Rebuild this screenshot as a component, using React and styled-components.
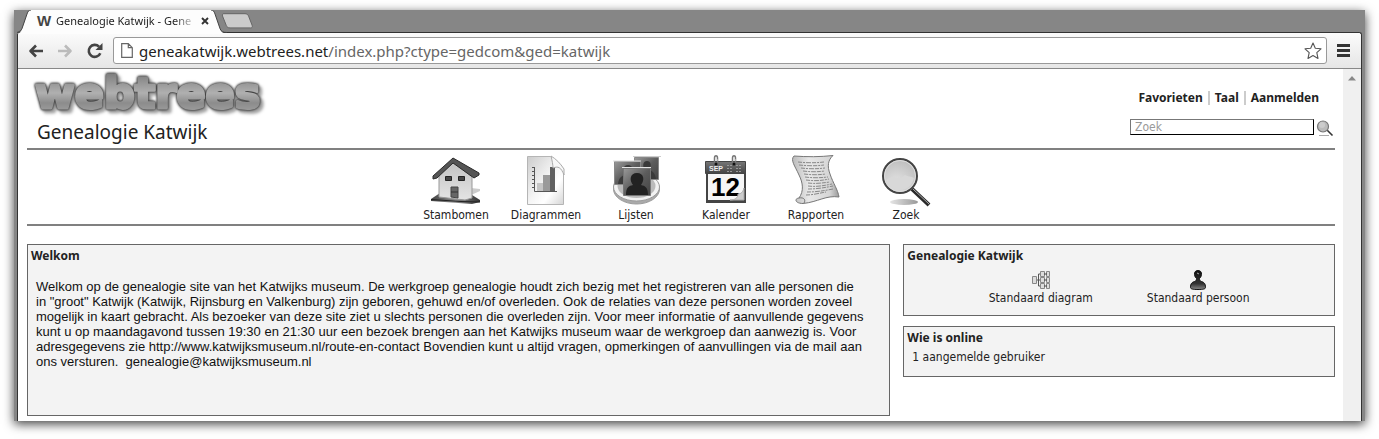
import React from 'react';
import styled, { createGlobalStyle } from 'styled-components';

const UI_FONT = '"DejaVu Sans Condensed", "DejaVu Sans", sans-serif';
const BOLD_FONT = '"Noto Sans", "Open Sans", sans-serif';
const TEXT_FONT = '"Liberation Sans", Arial, sans-serif';
const RULE = '#808080';
const PANEL = '#f3f3f3';

const MENU = [
  { label: 'Stambomen', icon: HouseIcon },
  { label: 'Diagrammen', icon: ChartIcon },
  { label: 'Lijsten', icon: PeopleIcon },
  { label: 'Kalender', icon: CalendarIcon },
  { label: 'Rapporten', icon: ScrollIcon },
  { label: 'Zoek', icon: MagnifierIcon },
];

function App() {
  return (
    <BrowserWindow>
      <GlobalStyle />
      <TabStrip>
        <Tab>
          <TabShape />
          <Favicon>W</Favicon>
          <TabTitle>Genealogie Katwijk - Gene</TabTitle>
          <CloseButton aria-label="Tab sluiten">
            <svg width="8" height="8" viewBox="0 0 8 8"><path d="M1 1l6 6M7 1L1 7" stroke="#333" strokeWidth="1.9" /></svg>
          </CloseButton>
        </Tab>
        <NewTab aria-label="Nieuw tabblad">
          <svg width="32" height="16" viewBox="0 0 32 16">
            <path d="M3 .7h21c2 0 3 1 3.600 2.500l3.500 9c.6 1.800 0 2.700-1.600 2.700H9c-2 0-3-.8-3.700-2.400L1.500 3C1 1.500 1.600.7 3 .7z" fill="#cbcbcb" stroke="#666" />
          </svg>
        </NewTab>
      </TabStrip>

      <Frame>
        <Toolbar>
          <ToolButton aria-label="Terug"><Arrow color="#444" /></ToolButton>
          <ToolButton aria-label="Vooruit"><Arrow color="#bbb" flip /></ToolButton>
          <ToolButton aria-label="Vernieuwen">
            <svg width="18" height="18" viewBox="0 0 18 18">
              <path d="M14.300 11.200A6 6 0 1 1 13 4.600" fill="none" stroke="#444" strokeWidth="2.600" />
              <path d="M16.500 1v7H9.500z" fill="#444" />
            </svg>
          </ToolButton>
          <AddressBar>
            <svg width="12" height="15" viewBox="0 0 12 15">
              <path d="M.7.700h6.600l4 4v9.600H.7zM7.300.7v4h4" fill="#fff" stroke="#666" strokeWidth="1.200" />
            </svg>
            <Url>geneakatwijk.webtrees.net<UrlPath>/index.php?ctype=gedcom&amp;ged=katwijk</UrlPath></Url>
            <ToolButton aria-label="Bladwijzer">
              <svg width="18" height="18" viewBox="0 0 18 18">
                <path d="M9 1l2.300 5.200 5.700.6-4.200 3.900 1.200 5.700L9 13.500l-5 2.900 1.200-5.700L1 6.800l5.700-.6z" fill="#fff" stroke="#555" strokeWidth="1.100" strokeLinejoin="round" />
              </svg>
            </ToolButton>
          </AddressBar>
          <ToolButton aria-label="Menu">
            <svg width="13" height="13" viewBox="0 0 13 13"><path d="M0 1.500h13M0 6.500h13M0 11.500h13" stroke="#333" strokeWidth="3" /></svg>
          </ToolButton>
        </Toolbar>

        <Viewport>
          <Page>
            <Header>
              <Brand>
                <Logo />
                <SiteTitle>Genealogie Katwijk</SiteTitle>
              </Brand>
              <HeaderTools>
                <UserLinks>
                  <UserLink href="#favorieten">Favorieten</UserLink>
                  <UserLink href="#taal">Taal</UserLink>
                  <UserLink href="#aanmelden">Aanmelden</UserLink>
                </UserLinks>
                <Search>
                  <SearchInput type="text" aria-label="Zoek" placeholder="Zoek" />
                  <SearchButton type="button" aria-label="Zoeken"><SmallMagnifier /></SearchButton>
                </Search>
              </HeaderTools>
            </Header>

            <Menu>
              {MENU.map(({ label, icon: Icon }) => (
                <MenuItem key={label} href={`#${label.toLowerCase()}`}>
                  <Icon />
                  {label}
                </MenuItem>
              ))}
            </Menu>

            <Columns>
              <Panel>
                <PanelTitle>Welkom</PanelTitle>
                <Welcome>
                  Welkom op de genealogie site van het Katwijks museum. De werkgroep genealogie houdt zich
                  bezig met het registreren van alle personen die in "groot" Katwijk (Katwijk, Rijnsburg en
                  Valkenburg) zijn geboren, gehuwd en/of overleden. Ook de relaties van deze personen worden
                  zoveel mogelijk in kaart gebracht. Als bezoeker van deze site ziet u slechts personen die
                  overleden zijn. Voor meer informatie of aanvullende gegevens kunt u op maandagavond tussen
                  19:30 en 21:30 uur een bezoek brengen aan het Katwijks museum waar de werkgroep dan aanwezig
                  is. Voor adresgegevens zie http://www.katwijksmuseum.nl/route-en-contact Bovendien kunt u
                  altijd vragen, opmerkingen of aanvullingen via de mail aan ons versturen.
                  &nbsp;genealogie@katwijksmuseum.nl
                </Welcome>
              </Panel>
              <Side>
                <Panel>
                  <PanelTitle>Genealogie Katwijk</PanelTitle>
                  <Shortcuts>
                    <Shortcut href="#diagram"><PedigreeIcon />Standaard diagram</Shortcut>
                    <Shortcut href="#persoon"><PersonIcon />Standaard persoon</Shortcut>
                  </Shortcuts>
                </Panel>
                <Panel>
                  <PanelTitle>Wie is online</PanelTitle>
                  <Online>1 aangemelde gebruiker</Online>
                </Panel>
              </Side>
            </Columns>
          </Page>
          <Scrollbar>
            <svg width="8" height="5" viewBox="0 0 8 5"><path d="M4 0l4 4.500H0z" fill="#888" /></svg>
          </Scrollbar>
        </Viewport>
      </Frame>
    </BrowserWindow>
  );
}

export default App;

function TabShape() {
  return (
    <TabSvg viewBox="0 0 210 24" preserveAspectRatio="none">
      <path d="M0 24c3-1 4-2 5-5L10 4c1-3 2-4 4-4h180c2 0 3 1 4 4l5 15c1 3 3 4 7 5z" fill="#fdfdfd" />
      <path d="M0 22.500c3-1 4-2 5-4L10 4c1-3 2-4 4-4M194 0c2 0 3 1 4 4l5 14.500c1 3 3 4 7 4" fill="none" stroke="#444" />
    </TabSvg>
  );
}

function Arrow({ color, flip }) {
  return (
    <svg width="16" height="14" viewBox="0 0 16 14">
      <path
        d={flip ? 'M1 7h12M8 1.500L13.500 7 8 12.500' : 'M15 7H3M8 1.500L2.500 7 8 12.500'}
        fill="none" stroke={color} strokeWidth="2.600" strokeLinejoin="round"
      />
    </svg>
  );
}

function Logo() {
  return (
    <LogoSvg width="240" height="46" viewBox="0 0 240 46">
      <defs>
        <linearGradient id="logoFill" x1="0" y1="0" x2="0" y2="1">
          <stop offset="0.100" stopColor="#7d7d7d" />
          <stop offset="0.500" stopColor="#b0b0b0" />
          <stop offset="0.700" stopColor="#8c8c8c" />
          <stop offset="1" stopColor="#aaa" />
        </linearGradient>
      </defs>
      <LogoText x="2" y="37">webtrees</LogoText>
    </LogoSvg>
  );
}

function HouseIcon() {
  return (
    <svg width="52" height="52" viewBox="0 0 52 52">
      <defs>
        <linearGradient id="wall" x1="0" y1="0" x2="0" y2="1">
          <stop offset="0" stopColor="#c2c2c2" />
          <stop offset="1" stopColor="#e4e4e4" />
        </linearGradient>
        <linearGradient id="ground" x1="0" y1="0" x2="1" y2="0">
          <stop offset="0" stopColor="#444" />
          <stop offset="0.500" stopColor="#8a8a8a" />
          <stop offset="1" stopColor="#333" />
        </linearGradient>
      </defs>
      <path d="M41 33l9 1v2l-9 4z" fill="#ccc" />
      <path d="M1 44l9-6 32 2 8 5v2l-8 2L1 46z" fill="url(#ground)" />
      <path d="M1 44.500l30 2 19 .5" fill="none" stroke="#222" />
      <path d="M9 20L23 7l19 15v21l-7 2-26-3z" fill="url(#wall)" stroke="#999" />
      <path d="M23 3L3 21v3l4-1L23 8l21 15 5-3v-2z" fill="#555" stroke="#2a2a2a" strokeLinejoin="round" />
      <path d="M15.500 21.500h6v4h-6zM28.500 21.500h6v4h-6z" fill="#444" stroke="#222" />
      <path d="M21 32h7v11l-7-1z" fill="#666" stroke="#444" />
      <path d="M21 37h7" stroke="#333" />
    </svg>
  );
}

function ChartIcon() {
  return (
    <svg width="52" height="52" viewBox="0 0 52 52">
      <defs>
        <linearGradient id="sheet" x1="0" y1="0" x2="1" y2="1">
          <stop offset="0" stopColor="#ccc" />
          <stop offset="0.500" stopColor="#f5f5f5" />
          <stop offset="0.700" stopColor="#fff" />
          <stop offset="1" stopColor="#d5d5d5" />
        </linearGradient>
      </defs>
      <path d="M7.500 1.500h23l13 13v35h-36z" fill="url(#sheet)" stroke="#b5b5b5" />
      <path d="M17 28h7v8h-7z" fill="#c5c5c5" />
      <path d="M23 20h7v16h-7z" fill="#9a9a9a" />
      <path d="M30 12h5v24h-5z" fill="#606060" />
      <path d="M14.500 12v24.500H37M12 12.500h3M12 16.500h3M12 20.500h3M12 24.500h3M12 28.500h3M12 32.500h3" fill="none" stroke="#555" />
      <path d="M31 1c1 4 2 9 2 12 5-2 8-1 11 7V14C40 8 36 4 31 1z" fill="#f8f8f8" stroke="#aaa" />
    </svg>
  );
}

function PeopleIcon() {
  return (
    <svg width="52" height="52" viewBox="0 0 52 52">
      <defs>
        <linearGradient id="pane" x1="0" y1="0" x2="1" y2="1">
          <stop offset="0" stopColor="#999" />
          <stop offset="0.500" stopColor="#5c5c5c" />
          <stop offset="1" stopColor="#444" />
        </linearGradient>
      </defs>
      <ellipse cx="26.500" cy="34" rx="23" ry="15" fill="#aaa" stroke="#999" />
      <ellipse cx="26.500" cy="32" rx="23" ry="14" fill="#f2f2f2" stroke="#999" />
      <ellipse cx="26.500" cy="31" rx="19" ry="12" fill="#bbb" />
      <path d="M24.500 2.500h24v22h-24z" fill="url(#pane)" stroke="#888" />
      <path d="M23 1.500h28" stroke="#ccc" />
      <path d="M29 24c0-6 3-8 6-9-3-4-2-9 2-9s5 5 2 9c4 1 6 3 7 9z" fill="#3a3a3a" />
      <path d="M4.500 6.500h26v23h-26z" fill="url(#pane)" stroke="#888" />
      <path d="M3 6h28" stroke="#ddd" />
      <path d="M8 29c1-7 4-8 7-9-3-4-2-10 3-10s6 6 3 10c3 1 6 2 7 9z" fill="#3a3a3a" />
      <path d="M13.500 13.500h27v27h-27z" fill="url(#pane)" stroke="#777" />
      <path d="M12 12.500h29" stroke="#e5e5e5" />
      <path d="M16 40c0-8 3-9 7-10-4-5-3-12 4-12s8 7 4 12c4 1 7 2 7 10z" fill="#222" />
    </svg>
  );
}

function CalendarIcon() {
  return (
    <svg width="52" height="52" viewBox="0 0 52 52">
      <defs>
        <linearGradient id="calendarTop" x1="0" y1="0" x2="0" y2="1">
          <stop offset="0" stopColor="#777" />
          <stop offset="1" stopColor="#444" />
        </linearGradient>
      </defs>
      <path d="M6 8h40v40H6z" fill="#444" />
      <path d="M8 18h36v27H8z" fill="#f6f6f6" />
      <path d="M5.500 6.500h40v12h-40z" fill="url(#calendarTop)" stroke="#444" />
      <CalendarText x="9" y="16" fill="#eee" $size={7}>SEP</CalendarText>
      <path d="M27 10.500h6M36 10.500h6M27 13.500h6M36 13.500h6M27 16.500h6M36 16.500h6" stroke="#999" strokeDasharray="2 1" />
      <CalendarText x="11" y="41" fill="#000" $size={26}>12</CalendarText>
      <path d="M30 45c5 0 8-2 8-6 3 0 5-2 6-6v12z" fill="#ccc" stroke="#aaa" />
      <path d="M14.500 8V3c0-3 3-3 3 0v4M32.500 8V3c0-3 3-3 3 0v4" fill="none" stroke="#777" strokeWidth="1.500" />
      <path d="M15 5h3M33 5h3" stroke="#ddd" />
      <circle cx="16" cy="9" r="1.500" fill="#111" />
      <circle cx="34" cy="9" r="1.500" fill="#111" />
    </svg>
  );
}

function ScrollIcon() {
  return (
    <svg width="52" height="52" viewBox="0 0 52 52">
      <defs>
        <linearGradient id="parchment" x1="0" y1="0" x2="1" y2="0">
          <stop offset="0" stopColor="#bbb" />
          <stop offset="0.350" stopColor="#e8e8e8" />
          <stop offset="0.800" stopColor="#d5d5d5" />
          <stop offset="1" stopColor="#999" />
        </linearGradient>
      </defs>
      <path d="M4 1c13 1 26 1 39-.5C38 5 37 11 40 19c3 9 8 16 9 23-13-2-21 5-36 6.500-8 0-9-5-4-5.500 5-7 4-15 0-23C5 11 0 5 4 1z" fill="url(#parchment)" stroke="#777" />
      <path d="M9 43c5-1 7 2 5 5" fill="none" stroke="#777" />
      <path d="M8 7c9 1 18 1 26 0M9 10c9 1 18 1 25 0M11 13c8 1 16 1 24 0M13 16c8 1 14 1 22 0M14 19c8 1 14 1 22 0M15 22c8 1 14 1 23 0M16 25c8 1 14 1 23-1M18 28c8 1 14 0 22-1M18 31c8 1 14 0 24-2M18 34c8 0 15-1 25-3M17 37c8 0 16-1 26-3M16 40c7 0 14-2 20-3" fill="none" stroke="#888" strokeDasharray="4 1 2 1 5 1" />
    </svg>
  );
}

function MagnifierIcon() {
  return (
    <svg width="52" height="52" viewBox="0 0 52 52">
      <defs>
        <radialGradient id="lens" cx="0.400" cy="0.700" r="0.700">
          <stop offset="0" stopColor="#e2e2e2" />
          <stop offset="1" stopColor="#bebebe" />
        </radialGradient>
        <linearGradient id="lensShadow" x1="0" y1="0" x2="1" y2="0">
          <stop offset="0" stopColor="#e5e5e5" />
          <stop offset="1" stopColor="#999" />
        </linearGradient>
      </defs>
      <ellipse cx="24" cy="47" rx="14" ry="3" fill="url(#lensShadow)" />
      <path d="M32 34l17 16" stroke="#2a2a2a" strokeWidth="4" />
      <path d="M33 34l16 15" stroke="#aaa" />
      <circle cx="20" cy="21" r="17" fill="url(#lens)" stroke="#444" strokeWidth="2" />
      <circle cx="20" cy="21" r="15.500" fill="none" stroke="#ddd" />
      <path d="M6 25c6-5 13 1 19-5 3 2 6 1 9 3-2 8-7 12-14 12S8 32 6 25z" fill="#d8d8d8" />
    </svg>
  );
}

function SmallMagnifier() {
  return (
    <svg width="18" height="18" viewBox="0 0 18 18">
      <path d="M3 16.500h10" stroke="#aaa" />
      <path d="M11 11l5.500 5.500" stroke="#333" strokeWidth="1.600" />
      <circle cx="7" cy="7.500" r="5.500" fill="#bbb" stroke="#777" strokeWidth="1.200" />
      <circle cx="6" cy="6" r="3" fill="#ccc" />
    </svg>
  );
}

function PedigreeIcon() {
  return (
    <svg width="20" height="20" viewBox="0 0 20 20" fill="#ddd" stroke="#888">
      <path d="M5 10h5M7.500 4v12M7.500 4H10M7.500 16H10" stroke="#555" />
      <path d="M1.500 6.500h4v7h-4zM9.500 1.500h4v5h-4zM15.500 1.500h3v5h-3zM9.500 7.500h4v5h-4zM15.500 7.500h3v5h-3zM9.500 13.500h4v5h-4zM15.500 13.500h3v5h-3z" />
      <path d="M13 4h3M13 10h3M13 16h3" stroke="#444" />
    </svg>
  );
}

function PersonIcon() {
  return (
    <svg width="20" height="20" viewBox="0 0 20 20">
      <defs>
        <linearGradient id="person" x1="0" y1="0" x2="0" y2="1">
          <stop offset="0" stopColor="#111" />
          <stop offset="0.700" stopColor="#333" />
          <stop offset="1" stopColor="#888" />
        </linearGradient>
      </defs>
      <path d="M10 .5c2.500 0 3.700 1.600 3.500 4-.2 2-1 3-2 4 0 1.500.5 2.500 2 3 2.500.8 4 2 4 6 0 1.400-2 2-7.500 2s-7.500-.6-7.500-2c0-4 1.500-5.200 4-6 1.500-.5 2-1.500 2-3-1-1-1.800-2-2-4-.2-2.400 1-4 3.500-4z" fill="url(#person)" stroke="#111" />
      <path d="M9 3l2 1" stroke="#aaa" />
    </svg>
  );
}

const GlobalStyle = createGlobalStyle`
  * {
    box-sizing: border-box;
  }

  body {
    margin: 0;
    padding: 10px 14px 18px;
    background: #fff;
    color: #222;
    font-family: ${UI_FONT};
    font-size: 12px;
    line-height: 14px;
  }

  a {
    color: inherit;
    text-decoration: none;
  }

  svg {
    display: block;
    flex: none;
  }

  button {
    padding: 0;
    border: 0;
    background: none;
  }
`;

const BrowserWindow = styled.div`
  padding: 0 3px;
  background: #868686;
  box-shadow: 0 3px 10px rgba(0, 0, 0, 0.75);
`;

const TabStrip = styled.div`
  display: flex;
  align-items: flex-start;
  height: 22px;
`;

const Tab = styled.div`
  position: relative;
  display: flex;
  align-items: center;
  width: 210px;
  height: 24px;
  padding: 0 10px 2px 20px;
  z-index: 1;
`;

const TabSvg = styled.svg`
  position: absolute;
  inset: 0;
  width: 100%;
  height: 100%;
  z-index: -1;
`;

const Favicon = styled.span`
  width: 19px;
  color: #444;
  font-family: ${TEXT_FONT};
  font-size: 15px;
  font-weight: bold;
`;

const TabTitle = styled.span`
  width: 141px;
  white-space: nowrap;
  font-family: ${BOLD_FONT};
  font-size: 11px;
  mask-image: linear-gradient(to right, #000 84%, transparent);
`;

const CloseButton = styled.button`
  margin-left: 4px;
`;

const NewTab = styled.button`
  margin-top: 3px;
  margin-left: -6px;
`;

const Frame = styled.div`
  border: 1px solid #333;
  border-bottom: 0;
  border-radius: 3px 3px 0 0;
  background: #fff;
`;

const Toolbar = styled.div`
  display: flex;
  align-items: center;
  gap: 10px;
  height: 36px;
  padding: 0 11px 0 10px;
  border-bottom: 1px solid #888;
  border-radius: 3px 3px 0 0;
  background: linear-gradient(#fbfbfb, #e6e6e6);
`;

const ToolButton = styled.button`
  flex: none;

  & + & {
    margin-left: 3px;
  }
`;

const AddressBar = styled.div`
  flex: 1;
  display: flex;
  align-items: center;
  gap: 6px;
  height: 27px;
  margin-left: -1px;
  padding: 0 4px 0 7px;
  border: 1px solid #999;
  border-radius: 3px;
  background: #fff;
`;

const Url = styled.span`
  flex: 1;
  font-family: ${BOLD_FONT};
  font-size: 15px;
  line-height: 22px;
`;

const UrlPath = styled.span`
  color: #666;
`;

const Viewport = styled.div`
  display: flex;
`;

const Page = styled.main`
  flex: 1;
  padding: 0 8px 5px 9px;
`;

const Scrollbar = styled.div`
  display: flex;
  justify-content: center;
  width: 18px;
  padding-top: 7px;
  background: #f0f0f0;
`;

const Header = styled.header`
  display: flex;
  justify-content: space-between;
  height: 79px;
`;

const Brand = styled.div`
  padding: 2px 0 0 6px;
`;

const LogoSvg = styled.svg`
  overflow: visible;
`;

const LogoText = styled.text`
  fill: url(#logoFill);
  stroke: url(#logoFill);
  stroke-width: 3px;
  stroke-linejoin: round;
  font-family: "DejaVu Sans", sans-serif;
  font-size: 43px;
  font-weight: bold;
  filter: drop-shadow(0 0 1px #333) drop-shadow(0 0 1px #555) drop-shadow(3px 3px 1px #aaa);
`;

const CalendarText = styled.text`
  font-family: ${TEXT_FONT};
  font-size: ${(props) => props.$size}px;
  font-weight: bold;
`;

const SiteTitle = styled.h1`
  margin: 3px 4px 0;
  font-family: ${BOLD_FONT};
  font-size: 19px;
  font-weight: normal;
  line-height: 24px;
`;

const HeaderTools = styled.div`
  display: flex;
  flex-direction: column;
  align-items: flex-end;
  gap: 14px;
  padding: 22px 1px 0 0;
`;

const UserLinks = styled.nav`
  display: flex;
  margin-right: 15px;
`;

const UserLink = styled.a`
  font-family: ${BOLD_FONT};
  font-weight: bold;

  & + & {
    margin-left: 5px;
    padding-left: 5px;
    border-left: 2px solid #ccc;
  }
`;

const Search = styled.form`
  display: flex;
  gap: 2px;
`;

const SearchInput = styled.input`
  width: 184px;
  height: 16px;
  padding: 0 4px;
  border: 1px solid #777;
  border-right-color: #000;
  border-bottom-color: #000;
  background: #fff;
  font-family: ${UI_FONT};
  font-size: 12px;

  &::placeholder {
    color: #999;
  }
`;

const SearchButton = styled.button`
  height: 18px;
`;

const Menu = styled.nav`
  display: flex;
  justify-content: center;
  height: 78px;
  padding-top: 5px;
  border-top: 2px solid ${RULE};
  border-bottom: 2px solid ${RULE};
`;

const MenuItem = styled.a`
  display: flex;
  flex-direction: column;
  align-items: center;
  gap: 1px;
  width: 90px;
`;

const Columns = styled.div`
  display: grid;
  grid-template-columns: 2fr 1fr;
  gap: 13px;
  margin-top: 18px;
`;

const Side = styled.div`
  display: flex;
  flex-direction: column;
  gap: 10px;
`;

const Panel = styled.section`
  padding: 4px 3px 10px;
  border: 1px solid #666;
  background: ${PANEL};
`;

const PanelTitle = styled.h2`
  margin: 0;
  font-family: ${BOLD_FONT};
  font-size: 12px;
  line-height: 14px;
`;

const Welcome = styled.p`
  margin: 16px 20px 36px 5px;
  color: #111;
  font-family: ${TEXT_FONT};
  font-size: 13px;
  line-height: 15px;
`;

const Shortcuts = styled.div`
  display: flex;
  justify-content: center;
  gap: 54px;
  margin-top: 7px;
`;

const Shortcut = styled.a`
  display: flex;
  flex-direction: column;
  align-items: center;
  gap: 1px;
`;

const Online = styled.p`
  margin: 5px 5px 2px;
`;
